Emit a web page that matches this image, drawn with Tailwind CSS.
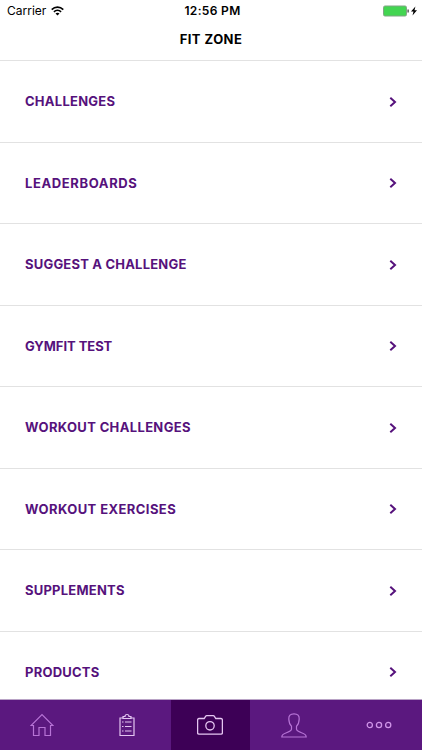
<!DOCTYPE html>
<html lang="en">
<head>
    <meta charset="UTF-8">
    <meta name="viewport" content="width=device-width, initial-scale=1.0">
    <title>Fit Zone</title>
    <script src="https://cdn.jsdelivr.net/npm/@tailwindcss/browser@4"></script>
</head>
<body class="bg-white font-['Inter',sans-serif]">
    <div class="flex flex-col w-[422px] h-[750px] overflow-hidden">
        <!-- Status bar + title -->
        <header class="shrink-0 h-[61px] border-b border-[#e2e2e2] text-black">
            <div class="grid grid-cols-3 items-center h-[22px] pl-[7px] pr-[4px]">
                <div class="flex items-center gap-[5px]">
                    <span class="text-[12px] tracking-[0px]">Carrier</span>
                    <svg class="w-[13px] h-[10px]" viewBox="0 0 13 10" fill="none" stroke="#000" stroke-width="1.6">
                        <path d="M0.7 3.6C4 0.3 9 0.3 12.3 3.6"/>
                        <path d="M2.9 5.9C5 3.9 8 3.9 10.1 5.9"/>
                        <path d="M4.5 7.5C5.7 6.5 7.3 6.5 8.5 7.5L6.5 9.6Z" fill="#000" stroke="none"/>
                    </svg>
                </div>
                <div class="text-center text-[12px] font-semibold tracking-[0.35px]">12:56 PM</div>
                <div class="flex items-center justify-end">
                    <svg class="w-[35px] h-[12px]" viewBox="0 0 35 12">
                        <rect x="0.5" y="1" width="23" height="10" rx="1.5" fill="#43d551" stroke="#80a583"/>
                        <path d="M24.5 4.5h1.2v3h-1.2z" fill="#333"/>
                        <path d="M32.4 1.4L28 6.6h2.5l-1 4 4.5-5.4h-2.5z" fill="#000"/>
                    </svg>
                </div>
            </div>
            <h1 class="text-center text-[13px] leading-[34px] font-bold tracking-[0.45px]">FIT ZONE</h1>
        </header>

        <!-- Menu -->
        <ul class="flex-1 min-h-0 overflow-hidden text-[13px] font-bold text-[#56127c]">
            <li class="flex items-center justify-between h-[81.5px] pl-[25px] pr-[25px] pt-px border-b border-[#e2e2e2]">
                <span class="tracking-[0.25px]">CHALLENGES</span>
                <svg class="w-[8px] h-[10px]" viewBox="0 0 8 10" fill="none" stroke="#56127c" stroke-width="2"><path d="M1.3 0.8L6 5L1.3 9.2"/></svg>
            </li>
            <li class="flex items-center justify-between h-[81.5px] pl-[25px] pr-[25px] pt-px border-b border-[#e2e2e2]">
                <span class="tracking-[0.62px]">LEADERBOARDS</span>
                <svg class="w-[8px] h-[10px]" viewBox="0 0 8 10" fill="none" stroke="#56127c" stroke-width="2"><path d="M1.3 0.8L6 5L1.3 9.2"/></svg>
            </li>
            <li class="flex items-center justify-between h-[81.5px] pl-[25px] pr-[25px] pt-px border-b border-[#e2e2e2]">
                <span class="tracking-[0.2px]">SUGGEST A CHALLENGE</span>
                <svg class="w-[8px] h-[10px]" viewBox="0 0 8 10" fill="none" stroke="#56127c" stroke-width="2"><path d="M1.3 0.8L6 5L1.3 9.2"/></svg>
            </li>
            <li class="flex items-center justify-between h-[81.5px] pl-[25px] pr-[25px] pt-px border-b border-[#e2e2e2]">
                <span class="tracking-[-0.05px]">GYMFIT TEST</span>
                <svg class="w-[8px] h-[10px]" viewBox="0 0 8 10" fill="none" stroke="#56127c" stroke-width="2"><path d="M1.3 0.8L6 5L1.3 9.2"/></svg>
            </li>
            <li class="flex items-center justify-between h-[81.5px] pl-[25px] pr-[25px] pt-px border-b border-[#e2e2e2]">
                <span class="tracking-[0.35px]">WORKOUT CHALLENGES</span>
                <svg class="w-[8px] h-[10px]" viewBox="0 0 8 10" fill="none" stroke="#56127c" stroke-width="2"><path d="M1.3 0.8L6 5L1.3 9.2"/></svg>
            </li>
            <li class="flex items-center justify-between h-[81.5px] pl-[25px] pr-[25px] pt-px border-b border-[#e2e2e2]">
                <span class="tracking-[0.42px]">WORKOUT EXERCISES</span>
                <svg class="w-[8px] h-[10px]" viewBox="0 0 8 10" fill="none" stroke="#56127c" stroke-width="2"><path d="M1.3 0.8L6 5L1.3 9.2"/></svg>
            </li>
            <li class="flex items-center justify-between h-[81.5px] pl-[25px] pr-[25px] pt-px border-b border-[#e2e2e2]">
                <span class="tracking-[0.22px]">SUPPLEMENTS</span>
                <svg class="w-[8px] h-[10px]" viewBox="0 0 8 10" fill="none" stroke="#56127c" stroke-width="2"><path d="M1.3 0.8L6 5L1.3 9.2"/></svg>
            </li>
            <li class="flex items-center justify-between h-[81.5px] pl-[25px] pr-[25px]">
                <span class="tracking-[0.22px]">PRODUCTS</span>
                <svg class="w-[8px] h-[10px]" viewBox="0 0 8 10" fill="none" stroke="#56127c" stroke-width="2"><path d="M1.3 0.8L6 5L1.3 9.2"/></svg>
            </li>
        </ul>

        <!-- Tab bar -->
        <nav class="shrink-0 grid grid-cols-[84px_87px_79px_88px_84px] h-[51px] bg-[#5b187f] border-t border-[#b9a3c6]">
            <div class="flex items-center justify-center">
                <svg class="w-[24px] h-[24px]" viewBox="0 0 24 24" fill="none" stroke="#b774d6" stroke-width="1.2">
                    <path d="M3.5 12.5H1L12 1.5L23 12.5H20.5V22.5H15V14.5H9V22.5H3.5Z"/>
                </svg>
            </div>
            <div class="flex items-center justify-center pr-[2px]">
                <svg class="w-[16px] h-[24px]" viewBox="0 0 16 24" fill="none" stroke="#e3c5f1" stroke-width="1.2">
                    <path d="M4.5 5H1V22.5H15V5H11.5"/>
                    <path d="M4 5.5V3.5H6C6 0.8 10 0.8 10 3.5H12V5.5Z"/>
                    <path d="M3 9H4.5M6 9H12.5M3 13.5H4.5M6 13.5H12.5M3 18H4.5M6 18H12.5"/>
                </svg>
            </div>
            <div class="flex items-center justify-center bg-[#3d0056] pr-px">
                <svg class="w-[26px] h-[20px]" viewBox="0 0 26 20" fill="none" stroke="#e6c6f2" stroke-width="1.3">
                    <path d="M2 3.5H7.2L8.6 1.3Q9 0.7 9.7 0.7H16.3Q17 0.7 17.4 1.3L18.8 3.5H24Q25.4 3.5 25.4 5V17.8Q25.4 19.2 24 19.2H2Q0.6 19.2 0.6 17.8V5Q0.6 3.5 2 3.5Z"/>
                    <circle cx="13" cy="10.8" r="4.2"/>
                </svg>
            </div>
            <div class="flex items-center justify-center">
                <svg class="w-[26px] h-[25px]" viewBox="0 0 26 25" fill="none" stroke="#b774d6" stroke-width="1.2">
                    <path d="M13 0.8C9.3 0.8 7.6 2.7 7.8 6C7.9 9 8.6 11.5 10.5 13.2V16C10.5 18 8.5 18.7 5.5 19.7C2.3 20.7 0.8 21.5 0.8 24H25.2C25.2 21.5 23.7 20.7 20.5 19.7C17.5 18.7 15.5 18 15.5 16V13.2C17.4 11.5 18.1 9 18.2 6C18.4 2.7 16.7 0.8 13 0.8Z"/>
                </svg>
            </div>
            <div class="flex items-center justify-center pr-[2px]">
                <svg class="w-[26px] h-[8px]" viewBox="0 0 26 8" fill="none" stroke="#cf94e8" stroke-width="1.3">
                    <circle cx="3.8" cy="4" r="2.6"/>
                    <circle cx="13" cy="4" r="2.6"/>
                    <circle cx="22.2" cy="4" r="2.6"/>
                </svg>
            </div>
        </nav>
    </div>
</body>
</html>
